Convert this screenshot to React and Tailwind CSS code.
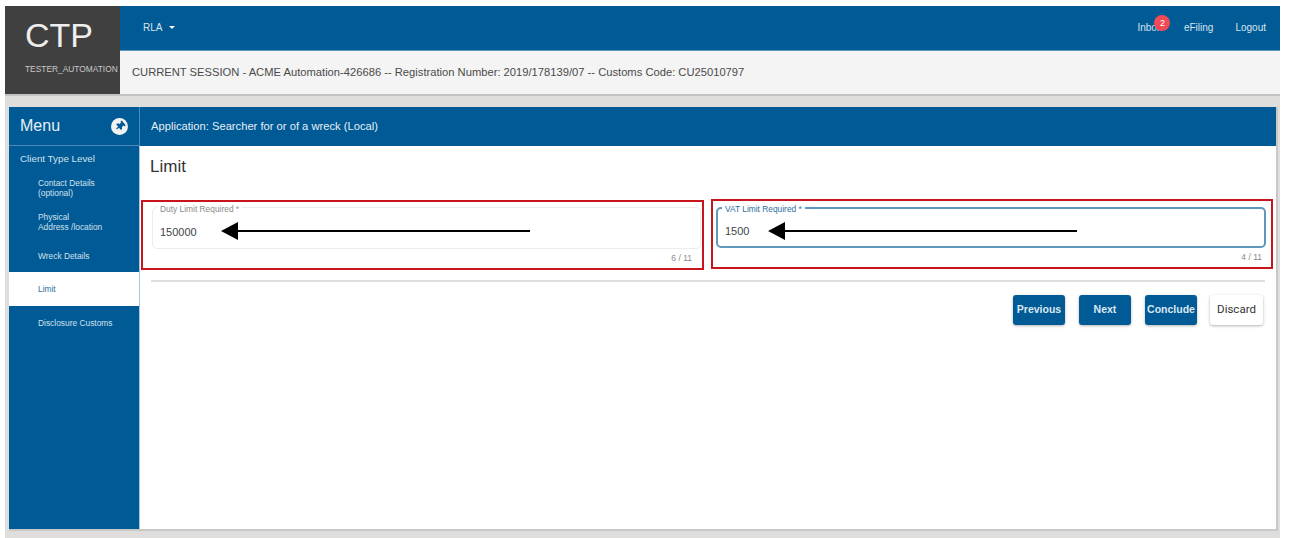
import { FaThumbtack } from "react-icons/fa";

const blue = "bg-[#005a96]";

const menuItems = [
  { label: ["Contact Details", "(optional)"] },
  { label: ["Physical", "Address /location"] },
  { label: ["Wreck Details"], h: "h-[33px]" },
  { label: ["Limit"], active: true },
  { label: ["Disclosure Customs"] },
];

const Arrow = ({ width }) => (
  <div className="flex items-center" style={{ width }}>
    <div className="w-0 h-0 border-y-[9px] border-y-transparent border-r-[17px] border-r-black" />
    <div className="flex-1 h-[2px] bg-black" />
  </div>
);

const Field = ({ label, value, count, focused, arrowLeft }) => (
  <div
    className={`border-2 border-[#c8141c] h-[70px] ${
      focused ? "flex-1 pl-[3px] pr-[5px] pt-[6px]" : "w-[563px] shrink-0 mt-[1px] pl-[9px] pr-[1px] pt-[5px]"
    }`}
  >
    <div
      className={`relative rounded-[5px] ${
        focused ? "h-[41px] border-2 border-[#5f97bd]" : "h-[42px] border border-[#ececec]"
      }`}
    >
      <span
        className={`absolute bg-white px-[3px] text-[8.4px] leading-[9px] left-[4px] ${
          focused ? "-top-[4px] text-[#2c6d9c]" : "-top-[3px] text-[#8a8a8a]"
        }`}
      >
        {label}
      </span>
      <span className={`absolute left-[7px] text-[11px] leading-[14px] text-[#444] ${focused ? "top-[15px]" : "top-[17px]"}`}>
        {value}
      </span>
      <div className={`absolute ${focused ? "top-[13px]" : "top-[14px]"}`} style={{ left: arrowLeft }}>
        <Arrow width={309} />
      </div>
    </div>
    <div className={`text-right text-[8.5px] leading-[9px] text-[#8a8a8a] mt-[5px] ${focused ? "pr-[4px]" : "pr-[9px]"}`}>
      {count}
    </div>
  </div>
);

const ActionButton = ({ children, light }) => (
  <button
    className={`h-[30px] rounded-[3px] shadow-[0_1px_3px_rgba(0,0,0,0.3)] ${
      light
        ? "w-[53px] bg-white text-[#333] text-[11.5px] font-['Roboto',sans-serif]"
        : `w-[52px] ${blue} text-[#dbe8f1] text-[10.5px] font-bold`
    }`}
  >
    {children}
  </button>
);

export default function App() {
  return (
    <div className="h-[538px] bg-white pt-[6px] pl-[5px] pr-[11px] font-['Liberation_Sans',Arial,sans-serif] overflow-hidden">
      <div className="h-[532px] bg-[#e0dedc]">
        <header className="flex h-[90px] border-b-2 border-[#c4c4c4]">
          <div className="w-[115px] bg-[#404040] text-[#eeeeee] flex flex-col pl-[20px] shrink-0">
            <div className="text-[34px] leading-[38px] mt-[10px]">CTP</div>
            <div className="text-[8.4px] leading-[9px] mt-[11px] text-[#c8c8c8] whitespace-nowrap">TESTER_AUTOMATION</div>
          </div>
          <div className="flex-1 flex flex-col">
            <div className={`h-[45px] ${blue} flex items-center justify-between pl-[23px] pr-[14px] pb-[1px] text-[10px] text-[#d8e4ee] border-b border-[#5f97bd]`}>
              <div className="flex items-center gap-[7px]">
                RLA
                <span className="w-0 h-0 border-x-[3.5px] border-x-transparent border-t-[3.5px] border-t-white" />
              </div>
              <div className="flex items-center gap-[22px]">
                <div className="relative">
                  Inbox
                  <span className="absolute -top-[5px] left-[17px] w-[16px] h-[16px] rounded-full bg-[#ef4a56] text-white text-[9px] leading-[16px] text-center">2</span>
                </div>
                <span>eFiling</span>
                <span>Logout</span>
              </div>
            </div>
            <div className="flex-1 bg-[#f4f4f4] flex items-center pl-[12px] text-[11.2px] text-[#4a4a4a]">
              CURRENT SESSION - ACME Automation-426686 -- Registration Number: 2019/178139/07 -- Customs Code: CU25010797
            </div>
          </div>
        </header>

        <div className="ml-[4px] mr-[2px] mt-[11px] h-[424px] flex flex-col bg-white border-b-2 border-r-2 border-[#c8c8c8]">
          <div className={`h-[39px] ${blue} flex text-[#e6eef4] shrink-0`}>
            <div className="w-[131px] flex items-center justify-between pl-[11px] pr-[11px] border-r border-b border-[#4d8ab5]">
              <span className="text-[16px]">Menu</span>
              <div className="w-[17px] h-[17px] rounded-full bg-[#f2f2f2] flex items-center justify-center">
                <FaThumbtack className="w-[10px] h-[10px] rotate-[50deg] text-[#005a96]" />
              </div>
            </div>
            <div className="flex-1 flex items-center pl-[11px] text-[11.2px]">Application: Searcher for or of a wreck (Local)</div>
          </div>

          <div className="flex flex-1 min-h-0">
            <aside className={`w-[131px] ${blue} text-[#d3e1ec] shrink-0 border-r border-[#a9c6dc]`}>
              <div className="pl-[11px] pt-[7px] text-[9.8px] leading-[11px] h-[25px]">Client Type Level</div>
              {menuItems.map((item) => (
                <div
                  key={item.label[0]}
                  className={`${item.h || "h-[34px]"} flex flex-col justify-center pl-[29px] text-[8.4px] leading-[10px] ${
                    item.active ? "bg-white text-[#2c6d9c]" : ""
                  }`}
                >
                  {item.label.map((l) => (
                    <div key={l}>{l}</div>
                  ))}
                </div>
              ))}
            </aside>

            <main className="flex-1 min-w-0 flex flex-col">
              <h1 className="text-[17px] leading-[20px] text-[#333] pl-[10px] pt-[11px] h-[53px]">Limit</h1>
              <div className="flex items-start gap-[7px] h-[71px] pl-[1px] pr-[3px]">
                <Field label="Duty Limit Required *" value="150000" count="6 / 11" arrowLeft={68} />
                <Field focused label="VAT Limit Required *" value="1500" count="4 / 11" arrowLeft={50} />
              </div>
              <div className="h-[2px] bg-[#dfdfdf] ml-[11px] mr-[11px] mt-[10px]" />
              <div className="flex justify-end gap-[14px] pr-[13px] mt-[13px]">
                <ActionButton>Previous</ActionButton>
                <ActionButton>Next</ActionButton>
                <ActionButton>Conclude</ActionButton>
                <div className="-ml-[1px]">
                  <ActionButton light>Discard</ActionButton>
                </div>
              </div>
            </main>
          </div>
        </div>
      </div>
    </div>
  );
}
